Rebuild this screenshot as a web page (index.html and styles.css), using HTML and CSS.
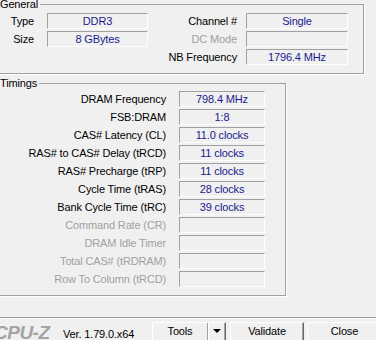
FILE: index.html
```html
<!DOCTYPE html>
<html lang="en">
<head>
	<meta charset="UTF-8">
	<title>CPU-Z Memory</title>
	<link rel="stylesheet" href="styles.css">
</head>
<body>
	<div class="group general">
		<span class="legend">General</span>
		<div class="gen-grid">
			<span class="lbl">Type</span><div class="val">DDR3</div>
			<span class="lbl r">Channel #</span><div class="val">Single</div>
			<span class="lbl">Size</span><div class="val">8 GBytes</div>
			<span class="lbl r off">DC Mode</span><div class="val"></div>
			<span></span><span></span>
			<span class="lbl r">NB Frequency</span><div class="val">1796.4 MHz</div>
		</div>
	</div>

	<div class="group timings">
		<span class="legend">Timings</span>
		<div class="tim-grid">
			<span class="lbl">DRAM Frequency</span><div class="val">798.4 MHz</div>
			<span class="lbl">FSB:DRAM</span><div class="val">1:8</div>
			<span class="lbl">CAS# Latency (CL)</span><div class="val">11.0 clocks</div>
			<span class="lbl">RAS# to CAS# Delay (tRCD)</span><div class="val">11 clocks</div>
			<span class="lbl">RAS# Precharge (tRP)</span><div class="val">11 clocks</div>
			<span class="lbl">Cycle Time (tRAS)</span><div class="val">28 clocks</div>
			<span class="lbl">Bank Cycle Time (tRC)</span><div class="val">39 clocks</div>
			<span class="lbl off">Command Rate (CR)</span><div class="val"></div>
			<span class="lbl off">DRAM Idle Timer</span><div class="val"></div>
			<span class="lbl off">Total CAS# (tRDRAM)</span><div class="val"></div>
			<span class="lbl off">Row To Column (tRCD)</span><div class="val"></div>
		</div>
	</div>

	<div class="footer">
		<div class="logo">CPU-Z</div>
		<div class="ver">Ver. 1.79.0.x64</div>
		<div class="btn tools">
			<span class="main">Tools</span>
			<span class="drop"><span class="arrow"></span></span>
		</div>
		<div class="btn validate">Validate</div>
		<div class="btn close">Close</div>
	</div>
</body>
</html>
```

FILE: styles.css
```css
*{
	margin: 0;
	padding: 0;
	box-sizing: border-box;
}
body{
	width: 376px;
	height: 340px;
	overflow: hidden;
	background: #f0f0f0;
	color: #000;
	font: 11px/13px "Liberation Sans", Arial, sans-serif;
	letter-spacing: -0.15px;
}
	.group{
		border: 1px solid #a0a0a0;
		box-shadow: 1px 1px 0 #fff;
	}
	.legend{
		display: block;
		width: fit-content;
		margin: -7px 0 0 4px;
		padding-right: 2px;
		background: #f0f0f0;
	}
	.general{
		width: 369px;
		height: 70px;
		margin: 4px 0 0 -5px;
	}
	.gen-grid{
		display: grid;
		grid-template-columns: 51px 101px 98px 102px;
		grid-auto-rows: 16px;
		row-gap: 2px;
		margin-top: 2px;
	}
	.timings{
		width: 291px;
		height: 213px;
		margin: 9px 0 0 -5px;
	}
	.tim-grid{
		display: grid;
		grid-template-columns: 183px 86px;
		grid-auto-rows: 16px;
		row-gap: 2px;
		margin-top: 1px;
	}
	.lbl{
		text-align: right;
		padding-right: 13px;
		line-height: 17px;
		white-space: nowrap;
	}
	.lbl.r{
		padding-right: 9px;
	}
	.lbl.off{
		color: #a0a0a0;
	}
	.val{
		border: 1px solid;
		border-color: #a0a0a0 #fff #fff #a0a0a0;
		text-align: center;
		line-height: 14px;
		color: #1a1a8e;
		white-space: nowrap;
	}
	.footer{
		display: flex;
		align-items: flex-start;
		margin-top: 21px;
		border-top: 1px solid #a0a0a0;
		box-shadow: inset 0 1px 0 #fff;
	}
	.logo{
		flex: none;
		width: 69px;
		margin: 5px 0 0 -6px;
		font: italic bold 19px/19px "Liberation Sans", Arial, sans-serif;
		letter-spacing: -0.5px;
		color: #a4a4a4;
	}
	.ver{
		flex: none;
		width: 89px;
		margin-top: 10px;
	}
	.btn{
		flex: none;
		height: 23px;
		margin-top: 4px;
		padding-top: 2px;
		border: 1px solid;
		border-color: #fff #696969 #696969 #fff;
		box-shadow: inset -1px -1px 0 #a0a0a0;
		text-align: center;
		cursor: pointer;
	}
	.tools{
		display: flex;
		width: 74px;
		margin-right: 4px;
		padding-top: 0;
	}
	.tools .main{
		width: 55px;
		padding-top: 2px;
		border-right: 1px solid #a0a0a0;
		box-shadow: 1px 0 0 #fff;
	}
	.tools .drop{
		flex: 1;
		display: flex;
		justify-content: center;
		padding-top: 6px;
	}
	.arrow{
		width: 0;
		height: 0;
		border-left: 4px solid transparent;
		border-right: 4px solid transparent;
		border-top: 4px solid #000;
	}
	.validate{
		width: 74px;
		margin-right: 3px;
	}
	.close{
		width: 75px;
	}
```
